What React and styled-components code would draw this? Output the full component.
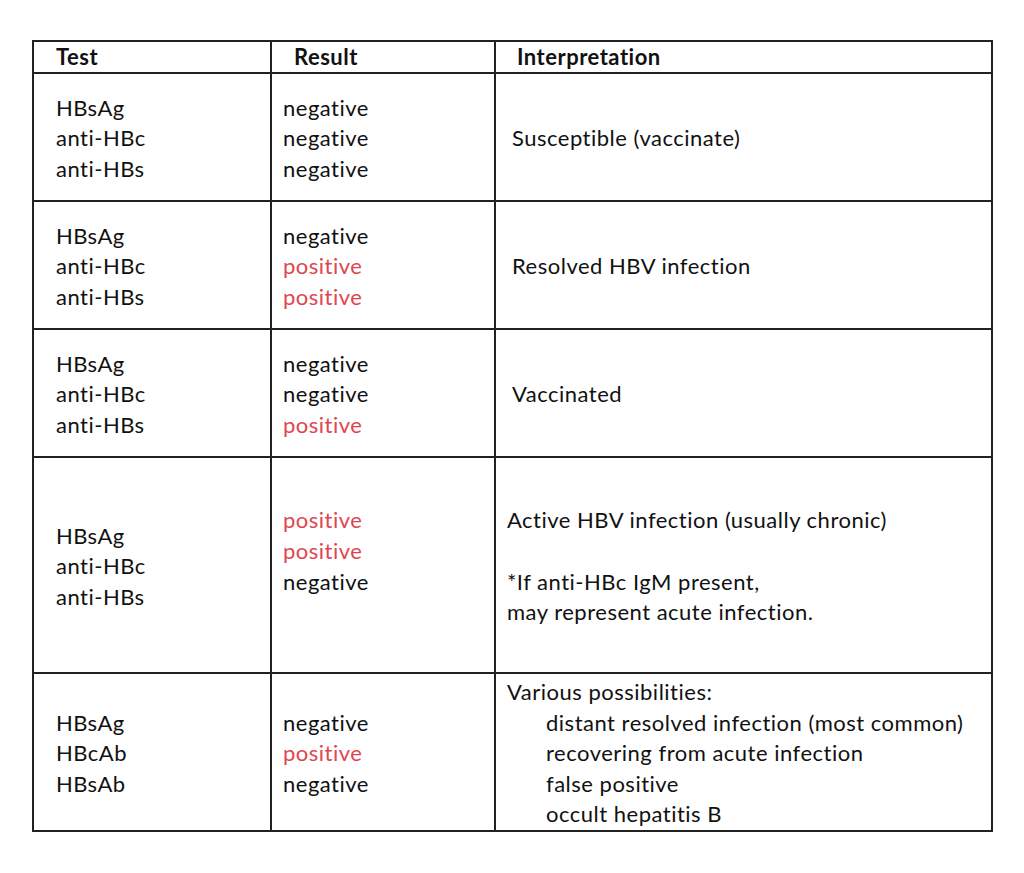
import React from 'react'
import styled, { createGlobalStyle } from 'styled-components'

const GlobalStyle = createGlobalStyle`
  body {
    margin: 0;
    background: #fff;
    font-family: Lato, "Open Sans", "Liberation Sans", sans-serif;
    color: #111;
  }
`

const Page = styled.div`
  padding: 40px 0 0 32px;
`

const Table = styled.table`
  width: 961px;
  border-collapse: collapse;
  table-layout: fixed;
  border: 2px solid #222;
  font-size: 22px;
  letter-spacing: 0.5px;
  line-height: 30.6px;
`

const HeadCell = styled.th`
  text-align: left;
  font-weight: 700;
  height: 30px;
  padding: 0 0 0 ${p => p.$pad}px;
  border: 2px solid #222;
  line-height: 28px;
`

const Row = styled.tr`
  height: ${p => p.$h}px;
`

const Cell = styled.td`
  vertical-align: middle;
  padding: 3px 0 0 ${p => p.$pad}px;
  border: 2px solid #222;
`

const Line = styled.div`
  color: ${p => (p.$pos ? '#e0454f' : '#111')};
  padding-left: ${p => (p.$indent ? 39 : 0)}px;
  white-space: nowrap;
`

const rows = [
  {
    h: 128,
    tests: ['HBsAg', 'anti-HBc', 'anti-HBs'],
    results: ['negative', 'negative', 'negative'],
    interp: ['Susceptible (vaccinate)'],
    interpPad: 16
  },
  {
    h: 128,
    tests: ['HBsAg', 'anti-HBc', 'anti-HBs'],
    results: ['negative', 'positive', 'positive'],
    interp: ['Resolved HBV infection'],
    interpPad: 16
  },
  {
    h: 128,
    tests: ['HBsAg', 'anti-HBc', 'anti-HBs'],
    results: ['negative', 'negative', 'positive'],
    interp: ['Vaccinated'],
    interpPad: 16
  },
  {
    h: 216,
    tests: ['HBsAg', 'anti-HBc', 'anti-HBs'],
    results: ['positive', 'positive', 'negative', ''],
    interp: [
      'Active HBV infection (usually chronic)',
      '',
      '*If anti-HBc IgM present,',
      'may represent acute infection.'
    ],
    interpPad: 11
  },
  {
    h: 157,
    tests: ['HBsAg', 'HBcAb', 'HBsAb'],
    results: ['negative', 'positive', 'negative'],
    interp: [
      'Various possibilities:',
      '>distant resolved infection (most common)',
      '>recovering from acute infection',
      '>false positive',
      '>occult hepatitis B'
    ],
    interpPad: 11
  }
]

const App = () => (
  <Page>
    <GlobalStyle />
    <Table>
      <colgroup>
        <col style={{ width: 238 }} />
        <col style={{ width: 224 }} />
        <col />
      </colgroup>
      <thead>
        <tr>
          <HeadCell $pad={22}>Test</HeadCell>
          <HeadCell $pad={22}>Result</HeadCell>
          <HeadCell $pad={21}>Interpretation</HeadCell>
        </tr>
      </thead>
      <tbody>
        {rows.map((row, i) => (
          <Row key={i} $h={row.h}>
            <Cell $pad={22}>
              {row.tests.map((t, j) => (
                <Line key={j}>{t}</Line>
              ))}
            </Cell>
            <Cell $pad={11}>
              {row.results.map((r, j) => (
                <Line key={j} $pos={r === 'positive'}>
                  {r || '\u00a0'}
                </Line>
              ))}
            </Cell>
            <Cell $pad={row.interpPad}>
              {row.interp.map((t, j) => (
                <Line key={j} $indent={t.startsWith('>')}>
                  {t.replace(/^>/, '') || '\u00a0'}
                </Line>
              ))}
            </Cell>
          </Row>
        ))}
      </tbody>
    </Table>
  </Page>
)

export default App
